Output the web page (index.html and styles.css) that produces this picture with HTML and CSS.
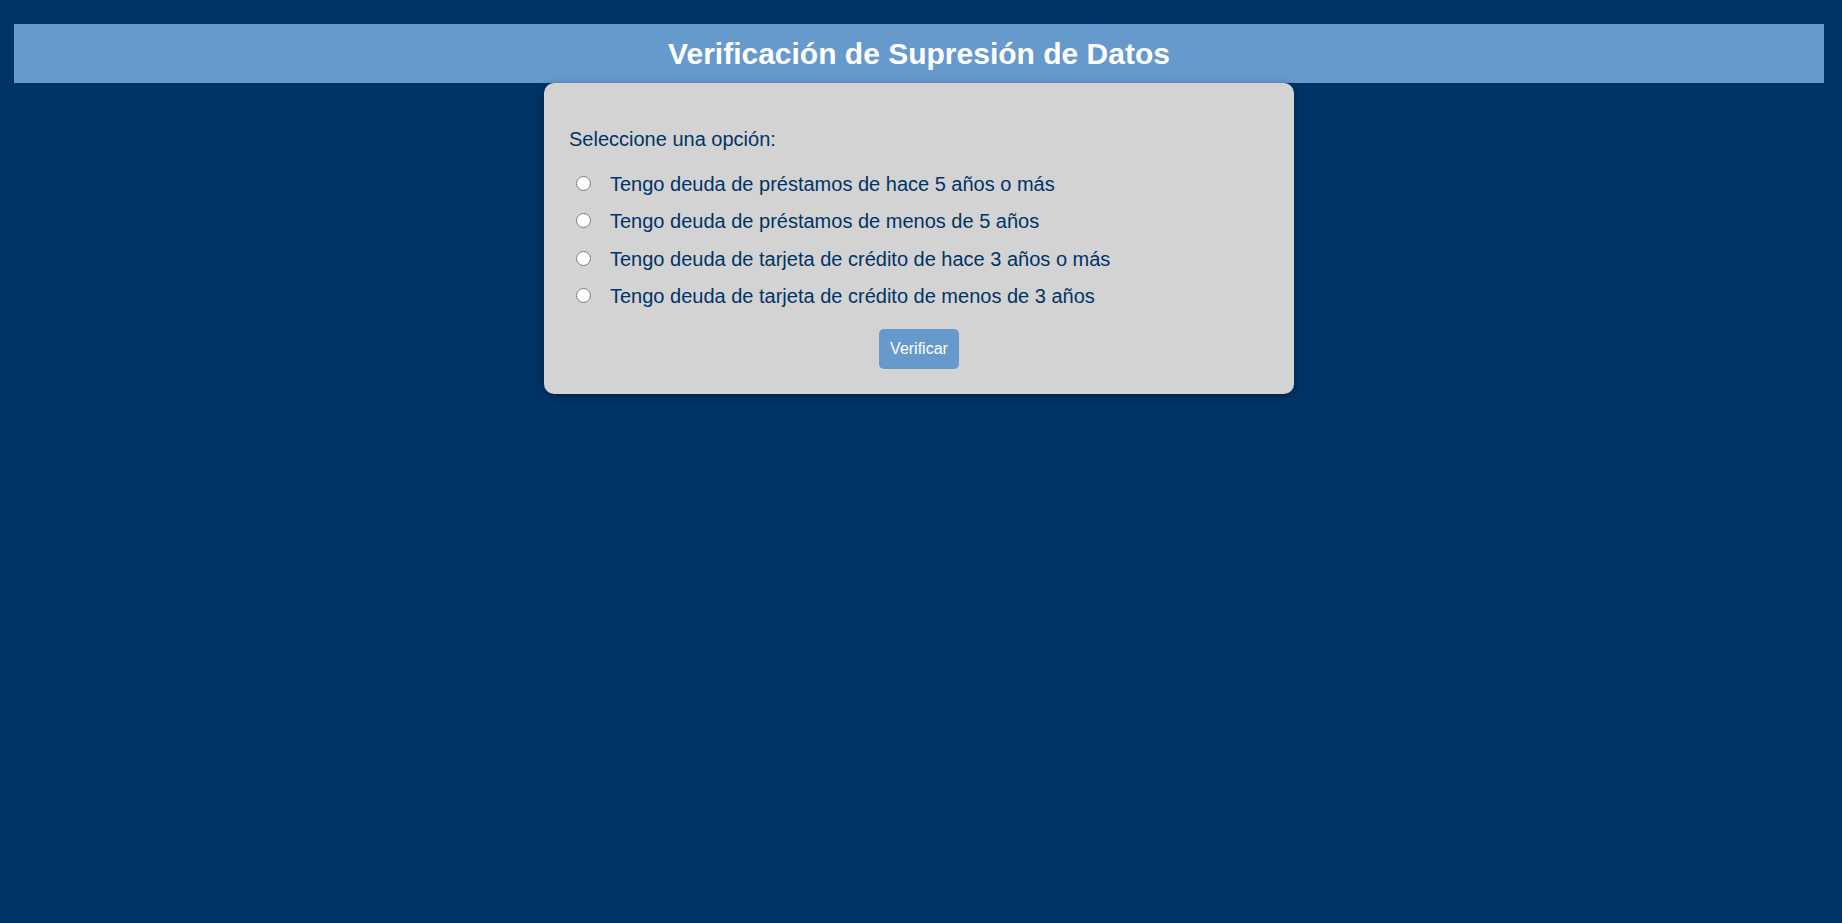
FILE: index.html
```html
<!DOCTYPE html>
<html lang="es">
<head>
<meta charset="utf-8">
<title>Verificación de Supresión de Datos</title>
<link rel="stylesheet" href="styles.css">
</head>
<body>
<header class="banner">
  <h1 class="banner-title">Verificación de Supresión de Datos</h1>
</header>
<main class="card">
  <form class="form">
    <p class="prompt">Seleccione una opción:</p>
    <label class="option"><input type="radio" name="deuda" class="radio"><span>Tengo deuda de préstamos de hace 5 años o más</span></label>
    <label class="option"><input type="radio" name="deuda" class="radio"><span>Tengo deuda de préstamos de menos de 5 años</span></label>
    <label class="option"><input type="radio" name="deuda" class="radio"><span>Tengo deuda de tarjeta de crédito de hace 3 años o más</span></label>
    <label class="option"><input type="radio" name="deuda" class="radio"><span>Tengo deuda de tarjeta de crédito de menos de 3 años</span></label>
    <div class="actions">
      <button type="button" class="btn">Verificar</button>
    </div>
  </form>
</main>
</body>
</html>
```

FILE: styles.css
```css
html, body {
  height: 100%;
}
body {
  margin: 0;
  padding: 24px 18px 0 14px;
  box-sizing: border-box;
  background: #003366;
  font-family: "Liberation Sans", Arial, sans-serif;
  color: #003366;
}
.banner {
  background: #6699cc;
  height: 59px;
  display: flex;
  align-items: center;
  justify-content: center;
}
.banner-title {
  margin: 0;
  font-size: 30px;
  font-weight: bold;
  color: #ffffff;
  line-height: 34px;
  padding-top: 1px;
}
.card {
  display: block;
  width: 700px;
  margin: 0 auto;
  padding: 25px;
  background: #d3d3d3;
  border-radius: 10px;
  box-shadow: 0 2px 8px rgba(0, 0, 0, 0.3);
}
.form {
  display: flex;
  flex-direction: column;
}
.prompt {
  margin: 20px 0 0;
  font-size: 20px;
  line-height: 23px;
}
.option {
  display: flex;
  align-items: center;
  font-size: 20px;
  line-height: 23px;
  padding: 7.3px 0;
}
.option:first-of-type {
  margin-top: 14.3px;
}
.radio {
  width: 15px;
  height: 15px;
  margin: -2px 19px 0 7px;
  flex: none;
}
.actions {
  display: flex;
  justify-content: center;
  margin-top: 13.3px;
}
.btn {
  width: 80px;
  height: 40px;
  background: #6699cc;
  color: #ffffff;
  border: none;
  border-radius: 5px;
  font-family: "Liberation Sans", Arial, sans-serif;
  font-size: 16px;
  padding: 0;
}
```
